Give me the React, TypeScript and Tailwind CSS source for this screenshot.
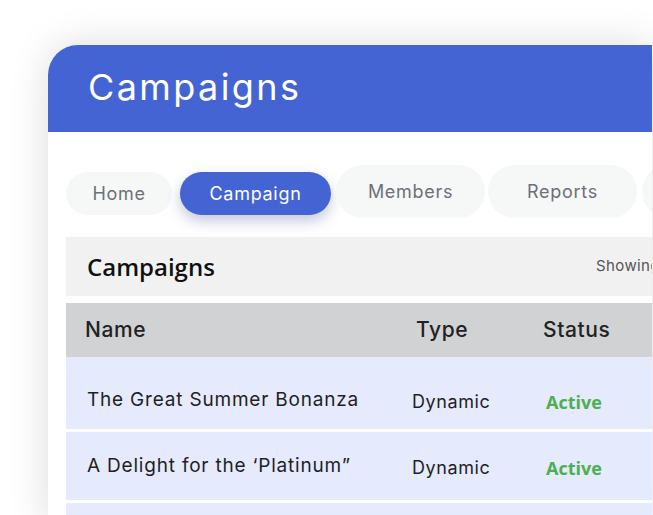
import React from "react"

const poppins = { fontFamily: "Inter, 'Noto Sans', sans-serif" }

const tabs = [
  { label: "Home", w: "w-[106px] h-[43px] mt-[4px]", gap: "" },
  { label: "Campaign", w: "w-[151px] h-[43px] mt-[4px]", gap: "ml-[8px]", active: true },
  { label: "Members", w: "w-[149px] h-[53px]", gap: "ml-[5px]" },
  { label: "Reports", w: "w-[149px] h-[53px]", gap: "ml-[3px]" },
  { label: "Settings", w: "w-[149px] h-[53px]", gap: "ml-[5px]" },
]

const rows = [
  { name: "The Great Summer Bonanza", type: "Dynamic", status: "Active", h: "h-[72px] pt-[14px]" },
  { name: "A Delight for the ‘Platinum”", type: "Dynamic", status: "Active", h: "h-[68px]" },
  { name: "Weekend Flash Sale", type: "Static", status: "Active", h: "h-[68px]" },
]

export default function App() {
  return (
    <div className="w-[653px] h-[515px] bg-white overflow-hidden">
      <div className="ml-[48px] mt-[45px] w-[604px] h-[480px] rounded-tl-[30px] bg-white overflow-hidden shadow-[0_0_40px_rgba(0,0,0,0.14)]">
        {/* шапка */}
        <div
          className="h-[87px] bg-[#4464d3] pl-[40px] flex items-center text-white text-[36px] tracking-[2.4px] pb-[4px]"
          style={poppins}
        >
          Campaigns
        </div>

        <div className="pl-[18px] w-[760px]">
          {/* вкладки */}
          <div className="mt-[33px] h-[53px] flex items-center text-[18px] tracking-[0.7px]" style={poppins}>
            {tabs.map((t) => (
              <div
                key={t.label}
                className={`${t.w} ${t.gap} shrink-0 rounded-full flex items-center justify-center ${
                  t.active
                    ? "bg-[#4464d3] text-white shadow-[0_6px_14px_rgba(40,60,120,0.28)]"
                    : "bg-[#f6f7f7] text-[#6c7178]"
                }`}
              >
                {t.label}
              </div>
            ))}
          </div>

          {/* заголовок таблицы */}
          <div className="mt-[19px] h-[59px] bg-[#f1f1f1] flex items-center pl-[21px]">
            <div
              className="w-[509px] text-[24px] font-semibold text-[#111]"
              style={{ fontFamily: "'Open Sans', sans-serif" }}
            >
              Campaigns
            </div>
            <div className="text-[15px] text-[#555] tracking-[0.4px] whitespace-nowrap" style={poppins}>
              Showing 1-10 of 24
            </div>
          </div>

          <div
            className="mt-[7px] h-[54px] bg-[#d1d2d3] flex items-center pl-[19px] text-[21px] tracking-[0.6px] font-medium text-[#222]"
            style={poppins}
          >
            <div className="w-[331px]">Name</div>
            <div className="w-[127px]">Type</div>
            <div>Status</div>
          </div>

          <div className="flex flex-col gap-[3px]">
            {rows.map((r) => (
              <div key={r.name} className={`${r.h} bg-[#e6eafd] flex items-center pl-[21px] text-[#1f1f1f]`}>
                <div className="w-[325px] text-[19px] tracking-[0.8px]" style={poppins}>
                  {r.name}
                </div>
                <div className="w-[134px] text-[18px] tracking-[0.6px] pt-[2px]" style={poppins}>
                  {r.type}
                </div>
                <div
                  className="text-[18px] font-bold text-[#4caf50] pt-[5px]"
                  style={{ fontFamily: "'Open Sans', sans-serif" }}
                >
                  {r.status}
                </div>
              </div>
            ))}
          </div>
        </div>
      </div>
    </div>
  )
}
